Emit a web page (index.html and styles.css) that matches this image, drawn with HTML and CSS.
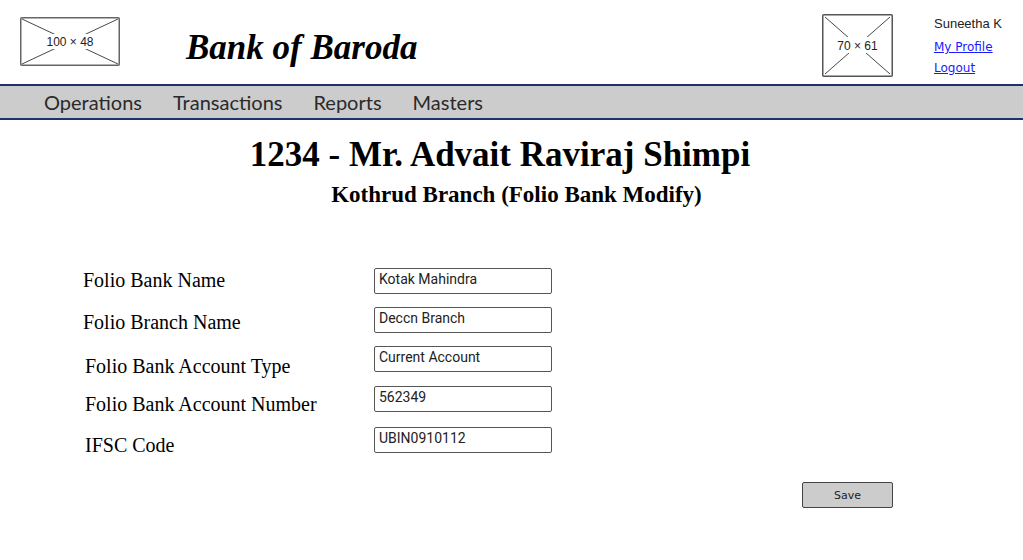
FILE: index.html
```html
<!DOCTYPE html>
<html>
<head>
<meta charset="utf-8">
<link rel="stylesheet" href="styles.css">
</head>
<body>
<header class="top">
  <div class="ph ph-logo">
    <svg width="100" height="49" viewBox="0 0 100 49">
      <rect x="0.75" y="0.75" width="98.5" height="47.5" fill="#fff" stroke="#666" stroke-width="1.5" rx="1"/>
      <line x1="2" y1="2" x2="98" y2="47" stroke="#333" stroke-width="0.9"/>
      <line x1="98" y1="2" x2="2" y2="47" stroke="#333" stroke-width="0.9"/>
      <rect x="26" y="17" width="48" height="15" fill="#fff"/>
      <text x="50" y="29" text-anchor="middle" class="phtext">100 × 48</text>
    </svg>
  </div>
  <div class="brand">Bank of Baroda</div>
  <div class="spacer"></div>
  <div class="ph ph-user">
    <svg width="71" height="63" viewBox="0 0 71 63">
      <rect x="0.75" y="0.75" width="69.5" height="61.5" fill="#fff" stroke="#555" stroke-width="1.5" rx="1"/>
      <line x1="3" y1="3" x2="68" y2="60" stroke="#333" stroke-width="0.9"/>
      <line x1="68" y1="3" x2="3" y2="60" stroke="#333" stroke-width="0.9"/>
      <rect x="13" y="23" width="45" height="16" fill="#fff"/>
      <text x="35.5" y="36" text-anchor="middle" class="phtext">70 × 61</text>
    </svg>
  </div>
  <div class="user">
    <div class="uname">Suneetha K</div>
    <a class="ulink" href="#">My Profile</a>
    <a class="ulink" href="#">Logout</a>
  </div>
</header>
<nav class="nav">
  <span class="navitem">Operations</span>
  <span class="navitem">Transactions</span>
  <span class="navitem">Reports</span>
  <span class="navitem">Masters</span>
</nav>
<main class="content">
  <h1 class="title">1234 - Mr. Advait Raviraj Shimpi</h1>
  <h2 class="subtitle">Kothrud Branch (Folio Bank Modify)</h2>
  <div class="form">
    <div class="row r1"><span class="label">Folio Bank Name</span><span class="input">Kotak Mahindra</span></div>
    <div class="row r2"><span class="label">Folio Branch Name</span><span class="input">Deccn Branch</span></div>
    <div class="row r3"><span class="label l2">Folio Bank Account Type</span><span class="input">Current Account</span></div>
    <div class="row r4"><span class="label l2">Folio Bank Account Number</span><span class="input">562349</span></div>
    <div class="row r5"><span class="label l2">IFSC Code</span><span class="input">UBIN0910112</span></div>
  </div>
  <div class="actions"><button class="save">Save</button></div>
</main>
</body>
</html>
```

FILE: styles.css
```css
* { box-sizing: border-box; }
body {
  margin: 0;
  background: #fff;
  font-family: "Liberation Serif", "Times New Roman", serif;
  color: #000;
  width: 1023px;
  height: 560px;
  overflow: hidden;
}
.top {
  height: 84px;
  display: flex;
  align-items: flex-start;
}
.ph svg { display: block; }
.phtext {
  font-family: "Liberation Sans", Arial, sans-serif;
  font-size: 12px;
  fill: #222;
}
.ph-logo { margin-left: 20px; margin-top: 17px; }
.brand {
  margin-left: 66px;
  margin-top: 28px;
  font-family: "Liberation Serif", "Times New Roman", serif;
  font-weight: bold;
  font-style: italic;
  font-size: 35px;
  line-height: 40px;
}
.spacer { flex: 1; }
.ph-user { margin-top: 14px; }
.user {
  margin-left: 41px;
  width: 89px;
  margin-top: 16px;
  display: flex;
  flex-direction: column;
}
.uname {
  font-family: "Liberation Sans", Arial, sans-serif;
  font-size: 13px;
  line-height: 16px;
  color: #222;
}
.ulink {
  font-family: "Comic Sans MS", "DejaVu Sans", sans-serif;
  font-size: 12px;
  line-height: 14px;
  margin-top: 8px;
  color: #1a1aff;
  text-decoration: underline;
}
.ulink + .ulink { margin-top: 7px; }
.nav {
  height: 36px;
  background: #cccccc;
  border-top: 2px solid #1d3170;
  border-bottom: 2px solid #1d3170;
  display: flex;
  align-items: center;
  padding-left: 44px;
  gap: 31px;
  font-family: Lato, "Open Sans", sans-serif;
  font-size: 20px;
  color: #2a2a2a;
}
.content { display: flex; flex-direction: column; }
.title {
  margin: 15px 23px 0 0;
  text-align: center;
  font-size: 35px;
  line-height: 40px;
  font-weight: bold;
}
.subtitle {
  margin: 6px 0 0 10px;
  text-align: center;
  font-size: 23px;
  line-height: 28px;
  font-weight: bold;
}
.form {
  margin-top: 59px;
  display: flex;
  flex-direction: column;
}
.row {
  display: flex;
  align-items: flex-start;
  height: 26px;
  padding-left: 83px;
}
.label {
  width: 291px;
  font-size: 20px;
  line-height: 22px;
}
.l2 { padding-left: 2px; }
.input {
  width: 178px;
  height: 26px;
  border: 1.5px solid #555;
  border-radius: 2px;
  font-family: Roboto, "Liberation Sans", sans-serif;
  font-size: 14px;
  line-height: 20px;
  padding-left: 4px;
  color: #222;
}
.r1 .label { margin-top: 1px; }
.r2 { margin-top: 13px; }
.r2 .label { margin-top: 4px; }
.r3 { margin-top: 13px; }
.r3 .label { margin-top: 9px; }
.r4 { margin-top: 14px; }
.r4 .label { margin-top: 7px; }
.r5 { margin-top: 15px; }
.r5 .label { margin-top: 7px; }
.actions {
  display: flex;
  justify-content: flex-end;
  padding-right: 130px;
  margin-top: 29px;
}
.save {
  width: 91px;
  height: 26px;
  background: #cccccc;
  border: 1.5px solid #444;
  border-radius: 2px;
  font-family: "Comic Sans MS", "DejaVu Sans", sans-serif;
  font-size: 11px;
  color: #222;
  padding: 0;
}
```
